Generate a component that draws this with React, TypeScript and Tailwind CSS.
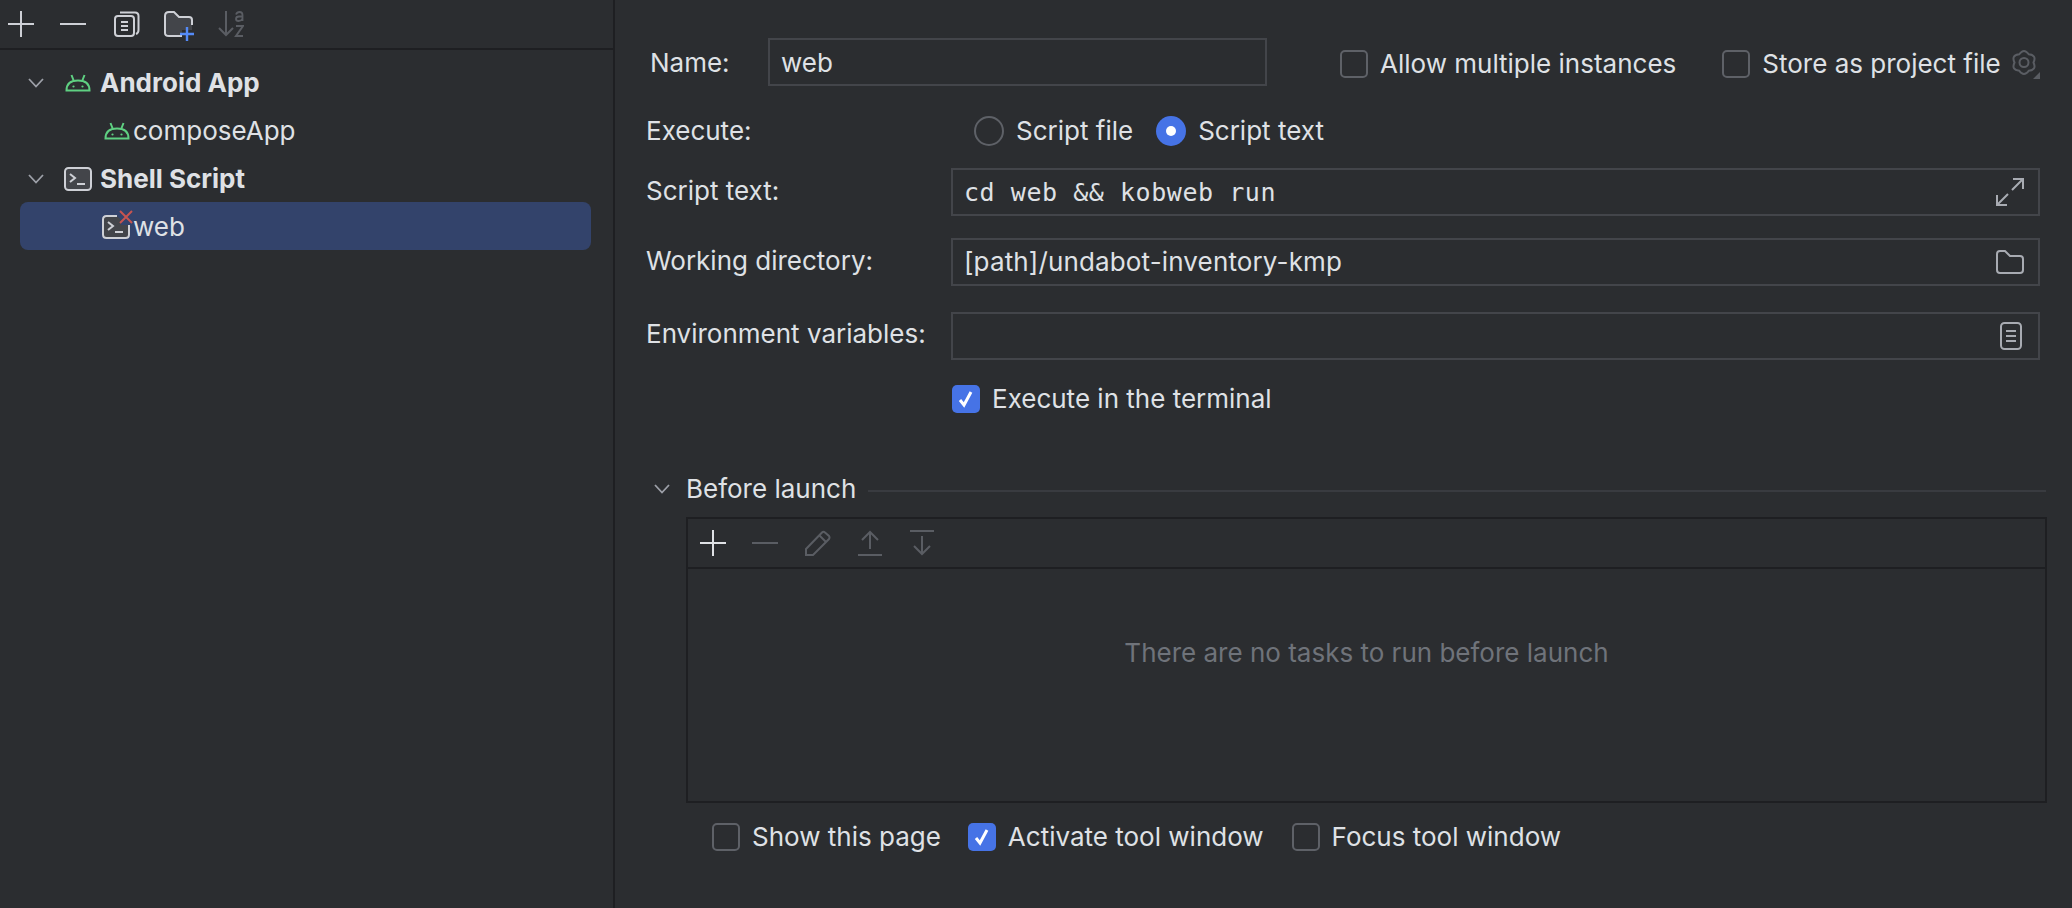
import type { ReactNode } from "react";

const GREY = "#ced0d6";
const DIM = "#5a5d63";

function PlusIcon({ color = GREY }: { color?: string }) {
  return (
    <svg width="26" height="26" viewBox="0 0 26 26" fill="none" stroke={color} strokeWidth="2">
      <path d="M0 13H26M13 0V26" />
    </svg>
  );
}

function MinusIcon({ color = GREY }: { color?: string }) {
  return (
    <svg width="26" height="26" viewBox="0 0 26 26" fill="none" stroke={color} strokeWidth="2">
      <path d="M0 13H26" />
    </svg>
  );
}

function CopyIcon() {
  return (
    <svg width="26" height="26" viewBox="0 0 26 26" fill="none" stroke={GREY} strokeWidth="2" strokeLinejoin="round">
      <rect x="1" y="5" width="19" height="20" rx="3" />
      <path d="M6 1.5H21Q24.5 1.5 24.5 5V19Q24.5 22 22 23" />
      <path d="M7 11H14M7 15H14M7 19H14" />
    </svg>
  );
}

function NewFolderIcon() {
  return (
    <svg width="32" height="30" viewBox="0 0 32 30" fill="none">
      <path
        d="M1 5Q1 1 5 1H10L15 6H25Q28 6 28 9V19H18V25H5Q1 25 1 22Z"
        fill="#43454a"
      />
      <path
        d="M18 25H5Q1 25 1 22V5Q1 1 5 1H10L15 6H25Q28 6 28 9V14"
        stroke={GREY}
        strokeWidth="2"
      />
      <path d="M16 23H30M23 16V30" stroke="#548af7" strokeWidth="2.4" />
    </svg>
  );
}

function SortIcon() {
  return (
    <svg width="26" height="26" viewBox="0 0 26 26" fill="none" stroke={DIM} strokeWidth="2">
      <path d="M8 0V24M1 17L8 24L15 17" />
      <path d="M18 3.5Q19 1 21.5 1Q24.5 1 24.5 4V10M24.5 5.5H21Q18 5.5 18 8Q18 10 20.5 10Q23.5 10 24.5 7.5" strokeWidth="1.8" />
      <path d="M18 15H25L18 25H25" strokeWidth="2" />
    </svg>
  );
}

function Chevron({ color = "#9da0a8" }: { color?: string }) {
  return (
    <svg width="16" height="10" viewBox="0 0 16 10" fill="none" stroke={color} strokeWidth="1.8">
      <path d="M1 1L8 8.5L15 1" />
    </svg>
  );
}

function AndroidIcon() {
  return (
    <svg width="26" height="18" viewBox="0 0 26 18" fill="none" stroke="#5fd082" strokeWidth="2">
      <path d="M1.5 16.5Q1.5 6.5 13 6.5Q24.5 6.5 24.5 16.5Z" />
      <path d="M6.5 1L9 7.5M19.5 1L17 7.5" />
      <circle cx="8.5" cy="12.5" r="1.1" fill="#5fd082" stroke="none" />
      <circle cx="17.5" cy="12.5" r="1.1" fill="#5fd082" stroke="none" />
    </svg>
  );
}

function ShellIcon() {
  return (
    <svg width="28" height="24" viewBox="0 0 28 24" fill="#43454a" stroke={GREY} strokeWidth="2">
      <rect x="1" y="1" width="26" height="22" rx="3.5" />
      <path d="M6 7L11 11L6 15" fill="none" />
      <path d="M13 17H21" fill="none" />
    </svg>
  );
}

// same terminal box with its top right corner cut away for the error mark
function ShellErrorIcon() {
  return (
    <div className="relative h-[24px] w-[28px]">
      <svg width="28" height="24" viewBox="0 0 28 24" fill="none" stroke={GREY} strokeWidth="2">
        <path d="M15 1H4.5Q1 1 1 4.5V19.5Q1 23 4.5 23H23.5Q27 23 27 19.5V10H19V5L15 1Z" fill="#43454a" stroke="none" />
        <path d="M15 1H4.5Q1 1 1 4.5V19.5Q1 23 4.5 23H23.5Q27 23 27 19.5V10" />
        <path d="M6 7L11 11L6 15" />
        <path d="M13 17H21" />
      </svg>
      <svg
        className="absolute left-[17px] top-[-5px]"
        width="14"
        height="14"
        viewBox="0 0 14 14"
        fill="none"
      >
        <path d="M1 1L13 13M13 1L1 13" stroke="#c75450" strokeWidth="2" />
      </svg>
    </div>
  );
}

function ExpandIcon() {
  return (
    <svg width="28" height="28" viewBox="0 0 28 28" fill="none" stroke="#a8abb2" strokeWidth="2">
      <path d="M16 12L27 1M17 1H27V11" />
      <path d="M12 16L1 27M1 17V27H11" />
    </svg>
  );
}

function FolderIcon() {
  return (
    <svg width="28" height="24" viewBox="0 0 28 24" fill="none" stroke="#a8abb2" strokeWidth="2">
      <path d="M1 4Q1 1 4 1H9L14 6H24Q27 6 27 9V20Q27 23 24 23H4Q1 23 1 20Z" />
    </svg>
  );
}

function DocIcon() {
  return (
    <svg width="22" height="28" viewBox="0 0 22 28" fill="none" stroke="#a8abb2" strokeWidth="2">
      <rect x="1" y="1" width="20" height="26" rx="3.5" />
      <path d="M6 9H16M6 14H16M6 19H16" />
    </svg>
  );
}

function GearIcon() {
  return (
    <div className="relative h-[30px] w-[30px]">
      <svg width="24" height="27" viewBox="0 0 24 27" fill="none" stroke={DIM} strokeWidth="2">
        <path d="M7.25 5.27Q12 -1.5 16.75 5.27Q25 6 21.5 13.5Q25 21 16.75 21.73Q12 28.5 7.25 21.73Q-1 21 2.5 13.5Q-1 6 7.25 5.27Z" />
        <circle cx="12" cy="13.5" r="4.5" />
      </svg>
      <div className="absolute bottom-0 right-[2px] h-0 w-0 border-b-[7px] border-l-[7px] border-b-[#5a5d63] border-l-transparent" />
    </div>
  );
}

function PencilIcon() {
  return (
    <svg width="26" height="26" viewBox="0 0 26 26" fill="none" stroke={DIM} strokeWidth="2">
      <path d="M1 19L17 2.5Q18.5 1 20 2.5L24 6Q25 7.5 24 9L8 25H1Z" />
      <path d="M14.5 5.5L21 12" />
    </svg>
  );
}

function UpIcon() {
  return (
    <svg width="26" height="26" viewBox="0 0 26 26" fill="none" stroke={DIM} strokeWidth="2">
      <path d="M13 3V19M5 10L13 2L21 10M1 25H25" />
    </svg>
  );
}

function DownIcon() {
  return (
    <svg width="26" height="26" viewBox="0 0 26 26" fill="none" stroke={DIM} strokeWidth="2">
      <path d="M13 6V23M5 16L13 24L21 16M1 1H25" />
    </svg>
  );
}

function Checkbox({ label, checked = false }: { label: string; checked?: boolean }) {
  return (
    <div className="flex items-center gap-[12px]">
      {checked ? (
        <div className="flex h-[28px] w-[28px] items-center justify-center rounded-[5px] bg-[#4673e6]">
          <svg width="18" height="18" viewBox="0 0 18 18" fill="none" stroke="#ffffff" strokeWidth="3">
            <path d="M3 10L7 15L14 2" />
          </svg>
        </div>
      ) : (
        <div className="h-[28px] w-[28px] rounded-[5px] border-2 border-[#5e6167]" />
      )}
      <span>{label}</span>
    </div>
  );
}

function Radio({ label, checked = false }: { label: string; checked?: boolean }) {
  return (
    <div className="flex items-center gap-[12px]">
      {checked ? (
        <div className="flex h-[30px] w-[30px] items-center justify-center rounded-full bg-[#4673e6]">
          <div className="h-[10px] w-[10px] rounded-full bg-white" />
        </div>
      ) : (
        <div className="h-[30px] w-[30px] rounded-full border-2 border-[#5e6167]" />
      )}
      <span>{label}</span>
    </div>
  );
}

function TreeRow({
  icon,
  label,
  bold,
  child,
  selected,
}: {
  icon: ReactNode;
  label: string;
  bold?: boolean;
  child?: boolean;
  selected?: boolean;
}) {
  return (
    <div
      className={
        "flex h-[48px] items-center rounded-[8px] pt-[2px] " + (selected ? "bg-[#33436b]" : "")
      }
    >
      {child ? (
        <div className="flex w-[113px] justify-end pr-[3px]">{icon}</div>
      ) : (
        <>
          <div className="ml-[8px] flex w-[32px] justify-start">
            <Chevron />
          </div>
          <div className="flex w-[35px] justify-center">{icon}</div>
        </>
      )}
      <span className={bold ? "ml-[5px] font-bold" : ""}>{label}</span>
    </div>
  );
}

function FieldRow({
  label,
  className,
  labelClass,
  icon,
  children,
}: {
  label: string;
  className: string;
  labelClass?: string;
  icon?: ReactNode;
  children?: ReactNode;
}) {
  return (
    <div className={"flex items-start " + className}>
      <div className={"w-[305px] shrink-0 " + (labelClass ?? "")}>{label}</div>
      <div className="flex h-[48px] w-[1089px] items-center justify-between border-2 border-[#43454a] pl-[11px] pr-[14px]">
        <div>{children}</div>
        {icon}
      </div>
    </div>
  );
}

export default function App() {
  return (
    <div className="flex h-[908px] w-[2072px] overflow-hidden bg-[#2b2d30] font-['Inter',sans-serif] text-[26px] leading-[32px] text-[#dfe1e5]">
      <aside className="w-[615px] shrink-0 border-r-2 border-[#1e1f22]">
        <div className="flex h-[50px] items-center border-b-2 border-[#1e1f22] pl-[8px]">
          <PlusIcon />
          <div className="ml-[26px]">
            <MinusIcon />
          </div>
          <div className="ml-[28px]">
            <CopyIcon />
          </div>
          <div className="ml-[24px] mt-[4px]">
            <NewFolderIcon />
          </div>
          <div className="ml-[22px]">
            <SortIcon />
          </div>
        </div>
        <div className="mt-[8px] flex flex-col pl-[20px] pr-[22px]">
          <TreeRow icon={<AndroidIcon />} label="Android App" bold />
          <TreeRow icon={<AndroidIcon />} label="composeApp" child />
          <TreeRow icon={<ShellIcon />} label="Shell Script" bold />
          <TreeRow icon={<ShellErrorIcon />} label="web" child selected />
        </div>
      </aside>

      <main className="flex-1 pl-[31px]">
        <div className="mt-[38px] flex h-[48px] items-center">
          <div className="ml-[4px] w-[118px] pt-[2px]">Name:</div>
          <div className="flex h-[48px] w-[499px] items-center border-2 border-[#43454a] pl-[11px] pt-[2px]">
            web
          </div>
          <div className="ml-[73px] mt-[3px]">
            <Checkbox label="Allow multiple instances" />
          </div>
          <div className="ml-[46px] mt-[3px]">
            <Checkbox label="Store as project file" />
          </div>
          <div className="ml-[11px] mt-[4px]">
            <GearIcon />
          </div>
        </div>

        <div className="mt-[29px] flex h-[32px] items-center">
          <div className="w-[328px]">Execute:</div>
          <Radio label="Script file" />
          <div className="ml-[23px]">
            <Radio label="Script text" checked />
          </div>
        </div>

        <FieldRow
          label="Script text:"
          className="mt-[21px]"
          labelClass="pt-[7px]"
          icon={<ExpandIcon />}
        >
          <span className="font-['DejaVu_Sans_Mono',monospace] text-[25px] tracking-[0.55px]">
            cd web &amp;&amp; kobweb run
          </span>
        </FieldRow>
        <FieldRow
          label="Working directory:"
          className="mt-[22px]"
          labelClass="pt-[7px]"
          icon={<FolderIcon />}
        >
          <span className="tracking-[0.14px]">[path]/undabot-inventory-kmp</span>
        </FieldRow>
        <FieldRow
          label="Environment variables:"
          className="mt-[26px]"
          labelClass="pt-[6px]"
          icon={<div className="mr-[2px]"><DocIcon /></div>}
        />

        <div className="ml-[306px] mt-[23px]">
          <Checkbox label="Execute in the terminal" checked />
        </div>

        <div className="mt-[58px] flex h-[32px] items-center">
          <div className="ml-[8px] w-[32px]">
            <Chevron />
          </div>
          <span>Before launch</span>
          <div className="ml-[12px] mr-[26px] mt-[4px] h-[2px] flex-1 bg-[#393b40]" />
        </div>

        <div className="ml-[40px] mt-[12px] flex h-[286px] w-[1361px] flex-col border-2 border-[#1e1f22]">
          <div className="flex h-[50px] shrink-0 items-center gap-[26px] border-b-2 border-[#1e1f22] pl-[12px]">
            <PlusIcon color="#dfe1e5" />
            <MinusIcon color={DIM} />
            <div className="ml-[1px]">
              <PencilIcon />
            </div>
            <UpIcon />
            <DownIcon />
          </div>
          <div className="flex flex-1 items-start justify-center pt-[68px] text-[#6f737a]">
            There are no tasks to run before launch
          </div>
        </div>

        <div className="ml-[66px] mt-[18px] flex items-center">
          <Checkbox label="Show this page" />
          <div className="ml-[27px]">
            <Checkbox label="Activate tool window" checked />
          </div>
          <div className="ml-[28px]">
            <Checkbox label="Focus tool window" />
          </div>
        </div>
      </main>
    </div>
  );
}
